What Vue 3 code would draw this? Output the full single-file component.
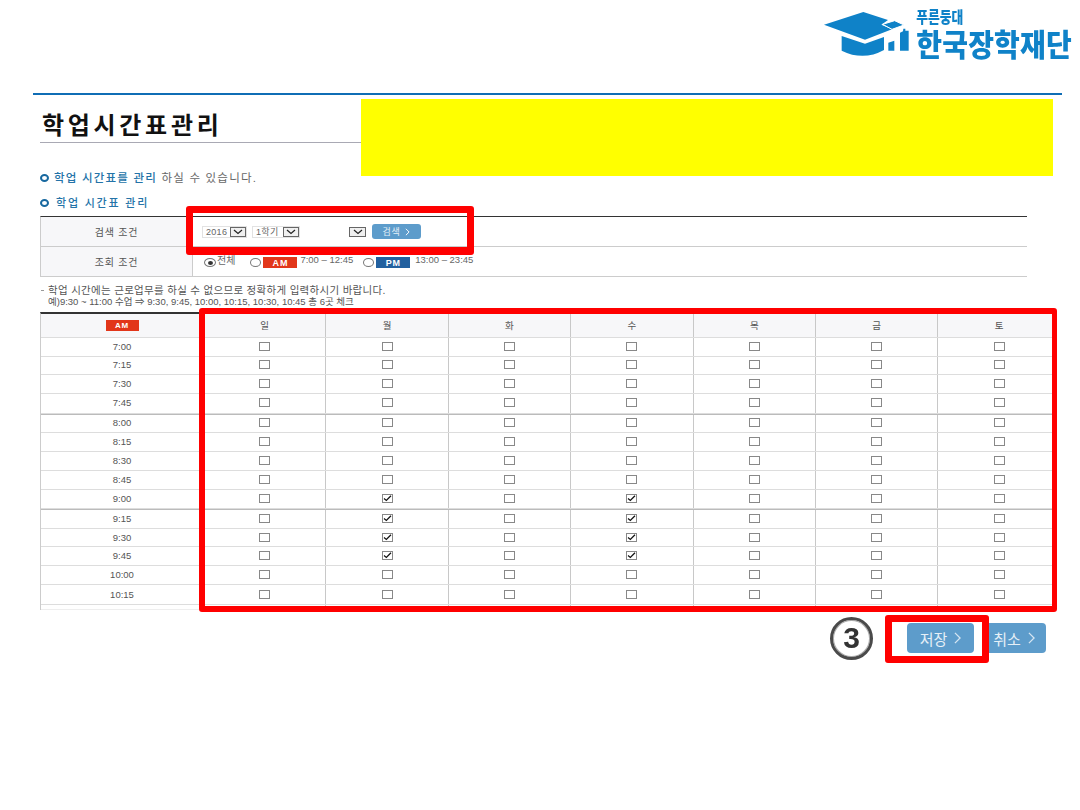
<script setup>
const days = ['일', '월', '화', '수', '목', '금', '토']
const rowsData = [
  ['7:00', 18.5], ['7:15', 18.5], ['7:30', 19], ['7:45', 19.5],
  ['8:00', 19], ['8:15', 19], ['8:30', 19], ['8:45', 19.3],
  ['9:00', 19], ['9:15', 20], ['9:30', 18.5], ['9:45', 19],
  ['10:00', 19], ['10:15', 20]
]
const checked = { '9:00': [1, 3], '9:15': [1, 3], '9:30': [1, 3], '9:45': [1, 3] }
const isChecked = (time, d) => (checked[time] || []).includes(d)
const isHour = (time) => time === '8:00' || time === '9:15'
</script>

<template>
  <div class="page">
    <header class="top">
      <div class="logo">
        <svg class="cap" viewBox="0 0 288 168" width="96" height="56" aria-hidden="true">
          <path fill="#0f82c8" d="M12 50 L130 12 L204 36 L184 50 L216 64 L135 95 Z" />
          <path fill="#0f82c8" stroke="#fff" stroke-width="3" d="M188 49 L224 38 L252 51 L216 64 Z" />
          <path fill="#0f82c8" d="M65 84 L135 107 L192 87 L192 126 Q130 160 65 128 Z" />
          <path fill="#0f82c8" d="M205 104 L223 98 L223 128 L205 128 Z" />
          <path fill="#0f82c8" d="M240 74 L249 70 L250 62 L256 62 L256 68 L266 68 L266 128 L240 128 Z" />
        </svg>
        <div class="logo-text">
          <div class="logo-small">푸른둥대</div>
          <div class="logo-big">한국장학재단</div>
        </div>
      </div>
    </header>

    <main class="content">
      <h1 class="title">학업시간표관리</h1>

      <p class="desc"><i class="dot"></i><b>학업 시간표를 관리</b> 하실 수 있습니다.</p>
      <h2 class="sub"><i class="dot"></i>학업 시간표 관리</h2>

      <section class="filter">
        <div class="f-row">
          <div class="f-label">검색 조건</div>
          <div class="f-body search">
            <span class="sel w45">2016<i class="arrow"><svg viewBox="0 0 10 6" width="10" height="6"><path d="M1 1 L5 4.5 L9 1" fill="none" stroke="#222" stroke-width="1.2" /></svg></i></span>
            <span class="sel w48">1학기<i class="arrow"><svg viewBox="0 0 10 6" width="10" height="6"><path d="M1 1 L5 4.5 L9 1" fill="none" stroke="#222" stroke-width="1.2" /></svg></i></span>
            <i class="arrow lone"><svg viewBox="0 0 10 6" width="10" height="6"><path d="M1 1 L5 4.5 L9 1" fill="none" stroke="#222" stroke-width="1.2" /></svg></i>
            <span class="search-btn">검색 <svg viewBox="0 0 6 10" width="5" height="8"><path d="M1 1 L5 5 L1 9" fill="none" stroke="#fff" stroke-width="1.2" /></svg></span>
          </div>
        </div>
        <div class="f-row">
          <div class="f-label">조회 조건</div>
          <div class="f-body lookup">
            <i class="radio on"></i><span class="r-text">전체</span>
            <i class="radio gap1"></i><span class="badge am">AM</span><span class="range">7:00 – 12:45</span>
            <i class="radio gap2"></i><span class="badge pm">PM</span><span class="range">13:00 – 23:45</span>
          </div>
        </div>
      </section>

      <div class="note">
        <p class="n1"><i class="bullet"></i>학업 시간에는 근로업무를 하실 수 없으므로 정확하게 입력하시기 바랍니다.</p>
        <p class="n2">예)9:30 ~ 11:00 수업 ⇒ 9:30, 9:45, 10:00, 10:15, 10:30, 10:45 총 6곳 체크</p>
      </div>

      <section class="grid">
        <div class="g-row head">
          <div class="g-cell first"><span class="badge am small">AM</span></div>
          <div v-for="d in days" :key="d" class="g-cell">{{ d }}</div>
        </div>
        <div
          v-for="row in rowsData"
          :key="row[0]"
          class="g-row"
          :class="{ hour: isHour(row[0]) }"
          :style="{ height: row[1] + 'px' }"
        >
          <div class="g-cell first">{{ row[0] }}</div>
          <div v-for="(d, i) in days" :key="d" class="g-cell">
            <span class="box">
              <svg v-if="isChecked(row[0], i)" viewBox="0 0 11 9" width="9" height="7"><path d="M1 4.5 L4 7 L10 1" fill="none" stroke="#111" stroke-width="1.6" /></svg>
            </span>
          </div>
        </div>
        <div class="g-row tail">
          <div class="g-cell first"></div>
          <div v-for="d in days" :key="d" class="g-cell"></div>
        </div>
      </section>

      <div class="actions">
        <span class="circled">3</span>
        <span class="btn save">저장 <svg viewBox="0 0 8 14" width="7" height="12"><path d="M1 1 L7 7 L1 13" fill="none" stroke="#d6e6f2" stroke-width="1.5" /></svg></span>
        <span class="btn cancel">취소 <svg viewBox="0 0 8 14" width="7" height="12"><path d="M1 1 L7 7 L1 13" fill="none" stroke="#d6e6f2" stroke-width="1.5" /></svg></span>
      </div>
    </main>

    <div class="mask"></div>
    <div class="mark mark-search"></div>
    <div class="mark mark-grid"></div>
    <div class="mark mark-save"></div>
  </div>
</template>

<style scoped>
.page {
  position: relative;
  width: 1080px;
  height: 810px;
  overflow: hidden;
  background: #fff;
  font-family: "Liberation Sans", "Noto Sans CJK KR", sans-serif;
  color: #555;
}
.top {
  height: 93px;
  margin: 0 18px 0 33px;
  border-bottom: 2px solid #0f6db5;
  display: flex;
  justify-content: flex-end;
  align-items: flex-start;
  box-sizing: content-box;
}
.logo {
  display: flex;
  align-items: flex-start;
  padding-top: 8px;
  margin-right: -10px;
}
.cap { display: block; flex: none; }
.logo-text { color: #0f82c8; font-family: "Noto Sans CJK KR", sans-serif; font-weight: 900; }
.logo-small { font-size: 12.8px; line-height: 18px; transform: scaleY(1.25); transform-origin: center; }
.logo-big { font-size: 28px; line-height: 34px; letter-spacing: 0.2px; white-space: nowrap; transform: scaleY(1.08); transform-origin: center; }
.content { padding-left: 40px; }
.title {
  margin: 0;
  width: 987px;
  height: 48px;
  box-sizing: border-box;
  border-bottom: 1px solid #a9a9b4;
  padding: 14px 0 0 2px;
  font-size: 24px;
  line-height: 30px;
  letter-spacing: 3.7px;
  color: #111;
  font-weight: 700;
  font-family: "Noto Sans CJK KR", sans-serif;
}
.desc, .sub {
  margin: 0;
  display: flex;
  align-items: center;
  line-height: 14px;
  font-weight: 400;
  white-space: pre-wrap;
}
.desc { margin-top: 28px; color: #666; font-size: 11.5px; letter-spacing: 1.2px; }
.desc b { color: #2473a8; font-weight: 500; }
.sub { margin-top: 11px; color: #2473a8; font-weight: 500; font-size: 11px; letter-spacing: 1.8px; }
.dot {
  width: 9px;
  height: 8px;
  box-sizing: border-box;
  border: 2.4px solid #17689f;
  border-radius: 50%;
  margin-right: 5px;
  flex: none;
}
.sub .dot { margin-right: 7px; }
.filter {
  margin-top: 6px;
  width: 987px;
  border-top: 1px solid #333;
  border-left: 1px solid #ccc;
  box-sizing: border-box;
}
.f-row {
  display: flex;
  height: 30px;
  border-bottom: 1px solid #ccc;
  box-sizing: border-box;
}
.f-label {
  width: 152px;
  flex: none;
  background: #f7f7f9;
  border-right: 1px solid #ccc;
  display: flex;
  align-items: center;
  justify-content: center;
  font-size: 10px;
  letter-spacing: 0.8px;
  color: #555;
  box-sizing: border-box;
}
.f-body { flex: 1; display: flex; font-size: 9.5px; color: #666; }
.search { align-items: center; padding-left: 9px; }
.sel {
  display: inline-flex;
  align-items: center;
  justify-content: space-between;
  height: 12px;
  border: 1px solid #e2e2e2;
  box-sizing: border-box;
  padding-left: 3px;
  font-size: 9px;
  letter-spacing: 0.3px;
  margin-right: 5px;
}
.w45 { width: 45px; }
.w48 { width: 48px; }
.arrow {
  width: 16px;
  height: 10px;
  box-sizing: border-box;
  background: #f0f0f0;
  border: 1px solid #666;
  display: inline-flex;
  align-items: center;
  justify-content: center;
  flex: none;
}
.lone { margin-left: 44px; width: 17px; }
.search-btn {
  margin-left: 6px;
  width: 49px;
  height: 15px;
  border-radius: 3px;
  background: #5d9ccb;
  color: #e6f0f7;
  display: inline-flex;
  align-items: center;
  justify-content: center;
  gap: 5px;
  font-size: 9px;
  letter-spacing: 0.6px;
}
.lookup { padding: 8px 0 0 11px; align-items: flex-start; line-height: 12px; }
.radio {
  width: 12px;
  height: 9px;
  margin-top: 3px;
  border: 1px solid #777;
  border-radius: 50%;
  box-sizing: border-box;
  flex: none;
  background: #fff;
  position: relative;
}
.radio.on::after {
  content: "";
  position: absolute;
  inset: 1.5px 2.5px;
  background: #333;
  border-radius: 50%;
}
.r-text { margin-left: 1px; font-size: 10px; }
.gap1 { margin-left: 15px; width: 11px; }
.gap2 { margin-left: 10px; width: 11px; }
.badge {
  color: #fff;
  font-weight: 700;
  font-size: 9px;
  letter-spacing: 0.8px;
  display: inline-flex;
  align-items: center;
  justify-content: center;
  width: 34px;
  height: 11px;
  margin-top: 2px;
  margin-left: 2px;
}
.badge.am { background: #e2361a; }
.badge.pm { background: #22609f; }
.badge.small { width: 33px; height: 11px; margin: 0; font-size: 8px; }
.range { margin-left: 3px; font-size: 9.5px; margin-top: -1px; }
.range:last-child { margin-left: 5px; }
.note {
  margin-top: 7px;
  line-height: 12px;
  color: #555;
}
.note p { margin: 0 0 0 8px; position: relative; white-space: nowrap; }
.n1 { font-size: 10.5px; letter-spacing: 0.3px; }
.n2 { font-size: 9.5px; letter-spacing: 0; }
.bullet {
  position: absolute;
  left: -7px;
  top: 6px;
  width: 3px;
  height: 1px;
  background: #999;
}
.grid {
  margin-top: 4px;
  width: 1012px;
  overflow: hidden;
  border-top: 2px solid #333;
  border-left: 1px solid #ccc;
  box-sizing: border-box;
  font-size: 9.5px;
  color: #555;
}
.g-row {
  display: grid;
  grid-template-columns: 162px repeat(7, 122.4px);
  height: 19px;
  border-bottom: 1px solid #ddd;
  box-sizing: border-box;
}
.g-row.hour { border-top: 1px solid #bbb; }
.g-row.head { height: 24px; background: #f7f7f9; }
.g-row.tail { height: 5px; border-bottom-color: #eee; }
.g-cell {
  display: flex;
  align-items: center;
  justify-content: center;
  border-left: 1px solid #c8c8c8;
  padding-bottom: 1px;
  box-sizing: border-box;
}
.g-cell.first { border-left: 0; }
.box {
  width: 11px;
  height: 9px;
  border: 1px solid #888;
  box-sizing: border-box;
  background: #fff;
  display: flex;
  align-items: center;
  justify-content: center;
}
.box svg { flex: none; }
.actions {
  width: 1006px;
  margin-top: 13px;
  display: flex;
  align-items: center;
  justify-content: flex-end;
  height: 30px;
}
.circled {
  width: 43px;
  height: 43px;
  box-sizing: border-box;
  border: 3px solid #4a4a4a;
  border-radius: 50%;
  box-shadow: inset 0 0 0 1px #aaa;
  display: flex;
  align-items: center;
  justify-content: center;
  font-size: 30px;
  line-height: 1;
  font-weight: 700;
  color: #333;
  font-family: "Liberation Sans", sans-serif;
  margin-right: 34px;
  flex: none;
  filter: blur(0.5px);
}
.btn {
  height: 30px;
  background: #5d9ccb;
  border-radius: 4px;
  color: #e6f0f7;
  font-size: 15px;
  font-family: "Noto Sans CJK KR", sans-serif;
  display: flex;
  align-items: center;
  justify-content: center;
  gap: 7px;
  flex: none;
}
.save { width: 67px; }
.cancel { width: 64px; margin-left: 8px; }
.mask {
  position: absolute;
  left: 361px;
  top: 99px;
  width: 692px;
  height: 77px;
  background: #ff0;
}
.mark {
  position: absolute;
  box-sizing: border-box;
  border-style: solid;
  border-color: #f00;
  border-radius: 3px;
}
.mark-search { left: 186px; top: 206px; width: 288px; height: 49px; border-width: 7px 7px 8px 7px; }
.mark-grid { left: 199px; top: 308px; width: 858px; height: 304px; border-width: 6px 5px 6px 6px; }
.mark-save { left: 885px; top: 615px; width: 104px; height: 48px; border-width: 7px; }
</style>
